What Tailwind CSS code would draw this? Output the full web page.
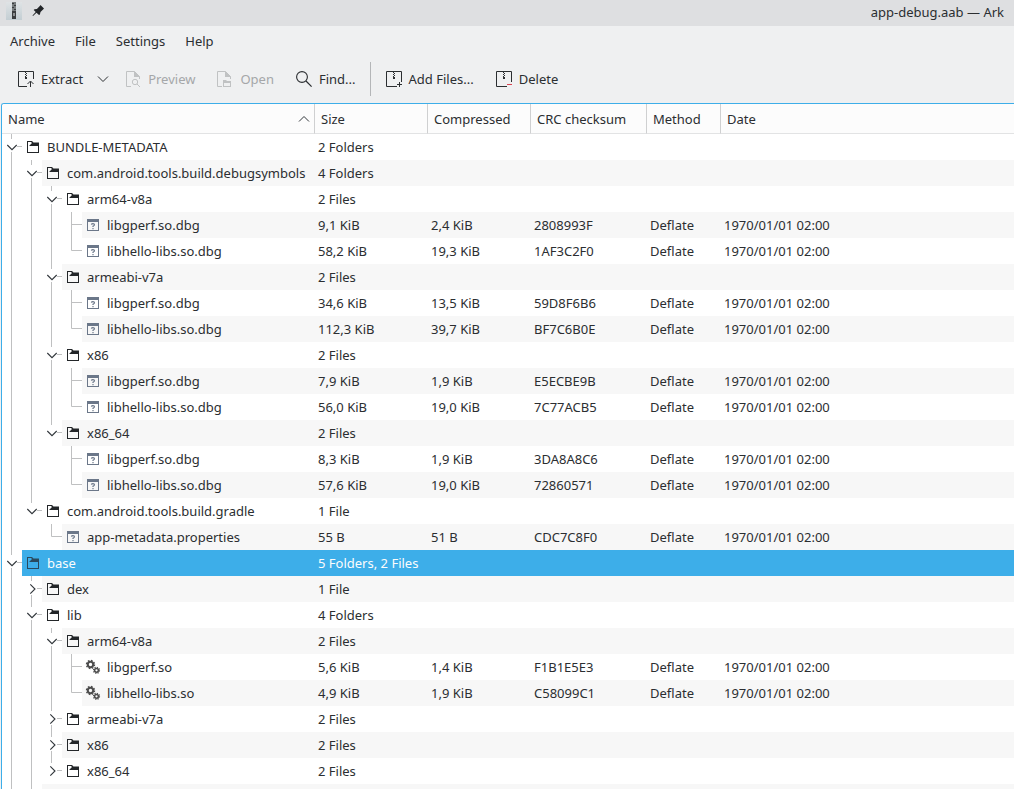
<!DOCTYPE html>
<html lang="en">
<head>
<meta charset="utf-8">
<title>app-debug.aab — Ark</title>
<script src="https://cdn.jsdelivr.net/npm/@tailwindcss/browser@4"></script>
</head>
<body class="flex h-screen flex-col overflow-hidden bg-[#eff0f1] font-['Noto_Sans',sans-serif] text-[13px] leading-[18px] text-[#2b2e31]">

<svg class="hidden" aria-hidden="true">
  <symbol id="folder" viewBox="0 0 16 16"><path fill="currentColor" fill-rule="evenodd" d="M2 2H7L8.5 3.5H14V14H2ZM3 3V13H13V7H4L7 4L6 3Z"/></symbol>
  <symbol id="unknown" viewBox="0 0 16 16"><path fill="#6b7789" fill-rule="evenodd" d="M2 2H14V14H2ZM3 5V13H13V5Z"/><path fill="none" stroke="#6b7789" stroke-width="1.2" d="M6.4 7.6Q6.6 6.6 8 6.6T9.5 7.7Q9.5 8.5 8 9.2V10M8 11V12.2"/></symbol>
  <symbol id="gears" viewBox="0 0 16 16">
    <g fill="none" stroke="#4d4d4d">
      <circle cx="5.5" cy="5.5" r="2.7" stroke-width="2"/>
      <circle cx="5.5" cy="5.5" r="4" stroke-width="1.4" stroke-dasharray="1.6 1.54"/>
      <circle cx="11.5" cy="11.3" r="1.9" stroke-width="1.5"/>
      <circle cx="11.5" cy="11.3" r="3" stroke-width="1.2" stroke-dasharray="1.2 1.15"/>
    </g>
  </symbol>
  <symbol id="archive" viewBox="0 0 16 16"><path fill="none" stroke="currentColor" d="M11 15.5H.5V.5H15.5V11"/><path fill="currentColor" d="M7 1h1v1H7zM8 2h1v1H8zM7 3h1v1H7zM8 4h1v1H8zM7 5h1v1H7zM7 6h2v2H7z"/></symbol>
  <symbol id="open" viewBox="0 0 20 26"><path d="M9.5 0V5M9.5 18V26M15 12.5H20" stroke="#bfc0c1" fill="none"/><path d="M5.3 11L10 15.7L14.7 11" stroke="#31363b" stroke-width="1.1" fill="none"/></symbol>
  <symbol id="open-last" viewBox="0 0 20 26"><path d="M9.5 0V5M15 12.5H20" stroke="#bfc0c1" fill="none"/><path d="M5.3 11L10 15.7L14.7 11" stroke="#31363b" stroke-width="1.1" fill="none"/></symbol>
  <symbol id="closed" viewBox="0 0 20 26"><path d="M9.5 0V5M9.5 19V26M15 12.5H20" stroke="#bfc0c1" fill="none"/><path d="M8.3 8.3L13 13L8.3 17.7" stroke="#31363b" stroke-width="1.1" fill="none"/></symbol>
  <symbol id="closed-last" viewBox="0 0 20 26"><path d="M9.5 0V5M15 12.5H20" stroke="#bfc0c1" fill="none"/><path d="M8.3 8.3L13 13L8.3 17.7" stroke="#31363b" stroke-width="1.1" fill="none"/></symbol>
  <symbol id="leaf" viewBox="0 0 20 26"><path d="M9.5 0V26M10 12.5H20" stroke="#bfc0c1" fill="none"/></symbol>
  <symbol id="leaf-last" viewBox="0 0 20 26"><path d="M9.5 0V12.5H20" stroke="#bfc0c1" fill="none"/></symbol>
  <symbol id="line" viewBox="0 0 20 26"><path d="M9.5 0V26" stroke="#bfc0c1" fill="none"/></symbol>
</svg>

<header class="flex h-[26px] shrink-0 items-center bg-[#dedfe1] pr-[10px] pl-1.5">
  <svg class="h-[18px] w-4 -mt-1" viewBox="0 0 16 18">
    <defs><linearGradient id="paper" x1="0" x2="0" y1="0" y2="1"><stop offset="0" stop-color="#dfe3e5"/><stop offset="1" stop-color="#c3ced3"/></linearGradient></defs>
    <path fill="url(#paper)" d="M0 0H16V18H0Z"/>
    <path fill="#777b7d" d="M6 0h4v11H6z"/>
    <path fill="#3a3d3f" d="M6 1h2v1H6zM8 3h2v1H8zM6 5h2v1H6zM8 7h2v1H8zM6 9h4v8H6z"/>
    <path fill="#8d9193" d="M7 11h2v3H7z"/>
  </svg>
  <svg class="ml-2.5 -mt-1 size-3.5" viewBox="0 0 14 14"><path fill="#232629" d="M8.5 1L12 4.5L11.3 5.3L8.5 7.9L7.9 10.5L7 11L4.5 8.7L1 12L.5 11.5L3.7 7.9L1.7 6L2.5 5.2L4.9 4.9L7.8 1.9Z"/></svg>
  <h1 class="ml-auto -mt-0.5">app-debug.aab — Ark</h1>
</header>

<nav class="flex h-[30px] shrink-0 items-center gap-5 pl-2.5" aria-label="Menu bar">
  <button>Archive</button><button>File</button><button>Settings</button><button>Help</button>
</nav>

<div class="mb-0.5 flex h-[45px] shrink-0 items-center pl-[18px]" role="toolbar">
  <button class="flex items-center gap-[7px]">
    <svg class="size-4" viewBox="0 0 16 16"><path fill="none" stroke="currentColor" d="M9 15.5H.5V.5H15.5V8M12.5 16V10.5M9.5 13L12.5 10L15.5 13"/><path fill="currentColor" d="M7 1h1v1H7zM8 2h1v1H8zM7 3h1v1H7zM8 4h1v1H8zM7 5h1v1H7zM7 6h2v2H7z"/></svg>
    Extract
  </button>
  <button class="ml-3.5" aria-label="Extract options"><svg class="size-3" viewBox="0 0 12 12"><path d="M1 3.5L6 8.5L11 3.5" fill="none" stroke="currentColor"/></svg></button>
  <button class="ml-4 flex items-center gap-[7px] text-[#a5a7a9]" disabled>
    <svg class="size-4" viewBox="0 0 16 16"><path fill="none" stroke="#c0c2c3" d="M6 15.5H1.5V.5H9.5L14.5 5.5V8"/><path fill="#c0c2c3" d="M9 0L15 6H9Z"/><circle cx="10" cy="11" r="2.7" fill="none" stroke="#c0c2c3"/><path stroke="#c0c2c3" d="M12 13L15 16"/></svg>
    Preview
  </button>
  <button class="ml-[22px] flex items-center gap-[7px] text-[#a5a7a9]" disabled>
    <svg class="size-4" viewBox="0 0 16 16"><path fill="none" stroke="#c0c2c3" d="M5 15.5H.5V.5H8.5L13.5 5.5V8"/><path fill="#c0c2c3" fill-rule="evenodd" d="M8 0L14 6H8ZM6 9H9L10 10H14V16H6ZM7 12V15H13V12Z"/></svg>
    Open
  </button>
  <button class="ml-[22px] flex items-center gap-[7px]">
    <svg class="size-4" viewBox="0 0 16 16"><circle cx="6" cy="6" r="5.4" fill="none" stroke="currentColor" stroke-width="1.1"/><path stroke="currentColor" stroke-width="1.2" d="M10 10L15.6 15.6"/></svg>
    Find...
  </button>
  <span class="mr-[15px] ml-3.5 h-[34px] w-px bg-[#b4b6b8]"></span>
  <button class="flex items-center gap-[7px]">
    <svg class="size-4"><use href="#archive"/><path stroke="currentColor" d="M13.5 11V16M11 13.5H16"/></svg>
    Add Files...
  </button>
  <button class="ml-[22px] flex items-center gap-[7px]">
    <svg class="size-4"><use href="#archive"/><path stroke="#da4453" d="M11 13.5H16"/></svg>
    Delete
  </button>
</div>

<main class="ml-px min-h-0 flex-1 overflow-hidden rounded-tl-[3px] border-t border-l border-[#3daee9] bg-white">
  <table class="w-full table-fixed border-separate border-spacing-0 text-left">
    <colgroup><col class="w-[313px]"><col class="w-[113px]"><col class="w-[103px]"><col class="w-[116px]"><col class="w-[74px]"><col></colgroup>
    <thead>
      <tr class="h-[30px] bg-[#fcfcfc]">
        <th class="border-r border-b border-r-[#cfd0d1] border-b-[#e2e3e4] px-1.5 font-normal"><span class="flex items-center justify-between">Name<svg class="-mr-[3px] size-3.5" viewBox="0 0 14 14"><path d="M2 9.5L7 4.5L12 9.5" fill="none" stroke="#31363b"/></svg></span></th>
        <th class="border-r border-b border-r-[#cfd0d1] border-b-[#e2e3e4] px-1.5 font-normal">Size</th>
        <th class="border-r border-b border-r-[#cfd0d1] border-b-[#e2e3e4] px-1.5 font-normal">Compressed</th>
        <th class="border-r border-b border-r-[#cfd0d1] border-b-[#e2e3e4] px-1.5 font-normal">CRC checksum</th>
        <th class="border-r border-b border-r-[#cfd0d1] border-b-[#e2e3e4] px-1.5 font-normal">Method</th>
        <th class="border-b border-b-[#e2e3e4] px-1.5 font-normal">Date</th>
      </tr>
    </thead>
    <tbody id="entries"></tbody>
  </table>
</main>

<script>
  // Guides run from the outermost level inwards: "-" is an empty level, "line" a passing one.
  const D = 'Deflate', T = '1970/01/01 02:00';
  const rows = [
    ['open', 'folder', 'BUNDLE-METADATA', '2 Folders'],
    ['line open', 'folder', 'com.android.tools.build.debugsymbols', '4 Folders'],
    ['line line open', 'folder', 'arm64-v8a', '2 Files'],
    ['line line line leaf', 'unknown', 'libgperf.so.dbg', '9,1 KiB', '2,4 KiB', '2808993F', D, T],
    ['line line line leaf-last', 'unknown', 'libhello-libs.so.dbg', '58,2 KiB', '19,3 KiB', '1AF3C2F0', D, T],
    ['line line open', 'folder', 'armeabi-v7a', '2 Files'],
    ['line line line leaf', 'unknown', 'libgperf.so.dbg', '34,6 KiB', '13,5 KiB', '59D8F6B6', D, T],
    ['line line line leaf-last', 'unknown', 'libhello-libs.so.dbg', '112,3 KiB', '39,7 KiB', 'BF7C6B0E', D, T],
    ['line line open', 'folder', 'x86', '2 Files'],
    ['line line line leaf', 'unknown', 'libgperf.so.dbg', '7,9 KiB', '1,9 KiB', 'E5ECBE9B', D, T],
    ['line line line leaf-last', 'unknown', 'libhello-libs.so.dbg', '56,0 KiB', '19,0 KiB', '7C77ACB5', D, T],
    ['line line open-last', 'folder', 'x86_64', '2 Files'],
    ['line line - leaf', 'unknown', 'libgperf.so.dbg', '8,3 KiB', '1,9 KiB', '3DA8A8C6', D, T],
    ['line line - leaf-last', 'unknown', 'libhello-libs.so.dbg', '57,6 KiB', '19,0 KiB', '72860571', D, T],
    ['line open-last', 'folder', 'com.android.tools.build.gradle', '1 File'],
    ['line - leaf-last', 'unknown', 'app-metadata.properties', '55 B', '51 B', 'CDC7C8F0', D, T],
    ['open', 'folder', 'base', '5 Folders, 2 Files'],
    ['line closed', 'folder', 'dex', '1 File'],
    ['line open', 'folder', 'lib', '4 Folders'],
    ['line line open', 'folder', 'arm64-v8a', '2 Files'],
    ['line line line leaf', 'gears', 'libgperf.so', '5,6 KiB', '1,4 KiB', 'F1B1E5E3', D, T],
    ['line line line leaf-last', 'gears', 'libhello-libs.so', '4,9 KiB', '1,9 KiB', 'C58099C1', D, T],
    ['line line closed', 'folder', 'armeabi-v7a', '2 Files'],
    ['line line closed', 'folder', 'x86', '2 Files'],
    ['line line closed-last', 'folder', 'x86_64', '2 Files'],
    ['line closed', 'folder', '', '']
  ];
  const selected = 16;
  document.getElementById('entries').innerHTML = rows.map(([guides, icon, name, ...cells], i) => {
    const tone = i === selected ? 'bg-[#3daee9] text-[#fcfcfc]' : i % 2 ? 'bg-[#f7f7f7]' : 'bg-white';
    const iconTone = i === selected ? 'text-[#2a4a5e]' : 'text-[#232629]';
    const tree = guides.split(' ').map(g => g === '-'
      ? '<span class="w-5 shrink-0"></span>'
      : `<svg class="h-[26px] w-5 shrink-0" aria-hidden="true"><use href="#${g}"/></svg>`).join('');
    const data = [0, 1, 2, 3, 4].map(c => `<td class="whitespace-nowrap px-[3px] ${tone}">${c === 0 ? `<span class="block w-0">${cells[0]}</span>` : cells[c] || ''}</td>`).join('');
    return `<tr class="h-[26px]" ${i === selected ? 'aria-selected="true"' : ''}><td class="p-0"><div class="flex h-[26px]">${tree}<span class="flex flex-1 items-center gap-1.5 whitespace-nowrap pl-[3px] ${tone}"><svg class="size-4 shrink-0 ${iconTone}" aria-hidden="true"><use href="#${icon}"/></svg>${name}</span></div></td>${data}</tr>`;
  }).join('');
</script>
</body>
</html>
